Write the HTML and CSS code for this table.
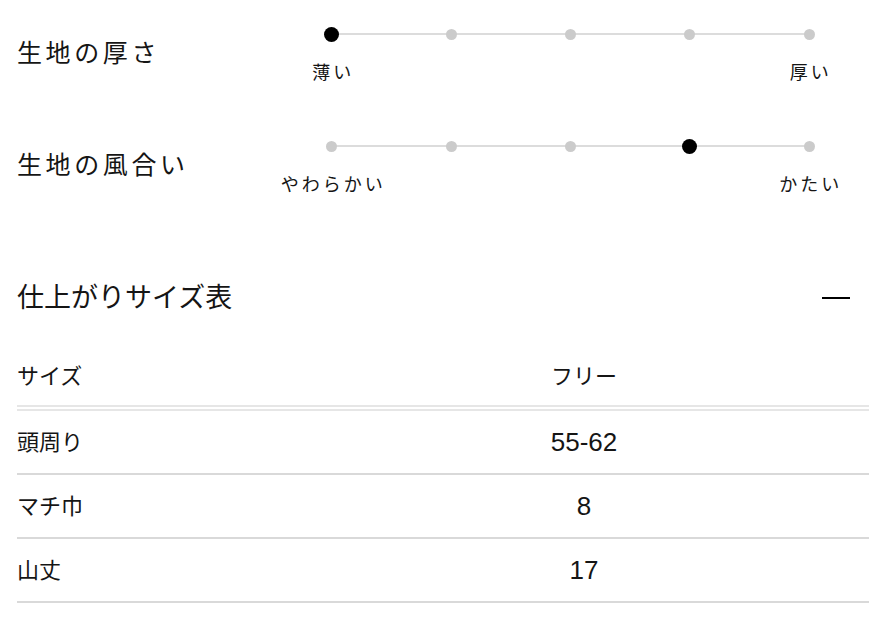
FILE: index.html
```html
<!DOCTYPE html>
<html lang="ja">
<head>
<meta charset="utf-8">
<title>生地の特徴</title>
<link rel="stylesheet" href="styles.css">
</head>
<body>
<section class="spec">
  <h3 class="spec-title">生地の厚さ</h3>
  <div class="slider">
    <div class="track">
      <span class="dot active"></span>
      <span class="dot"></span>
      <span class="dot"></span>
      <span class="dot"></span>
      <span class="dot"></span>
    </div>
    <div class="labels">
      <span class="label label-start">薄い</span>
      <span class="label label-end">厚い</span>
    </div>
  </div>
</section>

<section class="spec spec-second">
  <h3 class="spec-title">生地の風合い</h3>
  <div class="slider">
    <div class="track">
      <span class="dot"></span>
      <span class="dot"></span>
      <span class="dot"></span>
      <span class="dot active"></span>
      <span class="dot"></span>
    </div>
    <div class="labels">
      <span class="label label-start">やわらかい</span>
      <span class="label label-end">かたい</span>
    </div>
  </div>
</section>

<section class="size-section">
  <div class="size-head">
    <h2 class="size-title">仕上がりサイズ表</h2>
    <span class="collapse" aria-label="閉じる"></span>
  </div>
  <table class="size-table">
    <thead>
      <tr><th class="col-name">サイズ</th><th class="col-val">フリー</th></tr>
    </thead>
    <tbody>
      <tr><td class="col-name">頭周り</td><td class="col-val">55-62</td></tr>
      <tr><td class="col-name">マチ巾</td><td class="col-val">8</td></tr>
      <tr><td class="col-name">山丈</td><td class="col-val">17</td></tr>
    </tbody>
  </table>
</section>
</body>
</html>
```

FILE: styles.css
```css
html, body {
  background: #fff;
}
body {
  margin: 0;
  padding: 26px 17px 0;
  font-family: "Noto Sans CJK JP", "Noto Sans", sans-serif;
  color: #151515;
}

.spec {
  display: grid;
  grid-template-columns: 255px 1fr;
  align-items: center;
}
.spec-second {
  margin-top: 57px;
}
.spec-title {
  margin: 0 0 6px;
  font-size: 25px;
  font-weight: 400;
  line-height: 30px;
  letter-spacing: 3.6px;
}

.slider {
  display: flex;
  flex-direction: column;
}
.track {
  position: relative;
  display: grid;
  grid-template-columns: repeat(5, 1fr);
  align-items: center;
  height: 16px;
}
.track::before {
  content: "";
  position: absolute;
  left: 10%;
  right: 10%;
  top: 7px;
  height: 2px;
  background: #dcdcdc;
}
.dot {
  position: relative;
  justify-self: center;
  width: 11px;
  height: 11px;
  border-radius: 50%;
  background: #cbcbcb;
}
.dot.active {
  width: 15px;
  height: 15px;
  background: #000;
}
.labels {
  display: grid;
  grid-template-columns: repeat(5, 1fr);
  margin-top: 19px;
}
.label {
  text-align: center;
  white-space: nowrap;
  font-size: 18px;
  line-height: 20px;
  letter-spacing: 3px;
  padding-left: 3px;
}
.label-start {
  grid-column: 1;
}
.label-end {
  grid-column: 5;
}

.size-section {
  margin-top: 85px;
}
.size-head {
  display: flex;
  align-items: center;
  justify-content: space-between;
}
.size-title {
  margin: 0;
  font-size: 27px;
  font-weight: 400;
  line-height: 36px;
}
.collapse {
  display: block;
  width: 28px;
  height: 2px;
  background: #000;
  margin: 3px 19px 0 0;
}

.size-table {
  width: 100%;
  margin-top: 32px;
  border-collapse: collapse;
}
.size-table th,
.size-table td {
  padding: 0;
  font-weight: 400;
  vertical-align: middle;
}
.size-table th {
  height: 56px;
  padding-bottom: 3px;
  font-size: 22px;
  border-bottom: 6px double #e6e6e6;
}
.size-table td {
  height: 58px;
  padding: 2px 0;
  font-size: 22px;
  border-bottom: 2px solid #d9d9d9;
}
.size-table td.col-name {
  padding: 0 0 4px;
}
.col-name {
  width: 282px;
  text-align: left;
}
.col-val {
  text-align: center;
}
.size-table td.col-val {
  font-family: "Liberation Sans", Arial, sans-serif;
  font-size: 26px;
}
```
